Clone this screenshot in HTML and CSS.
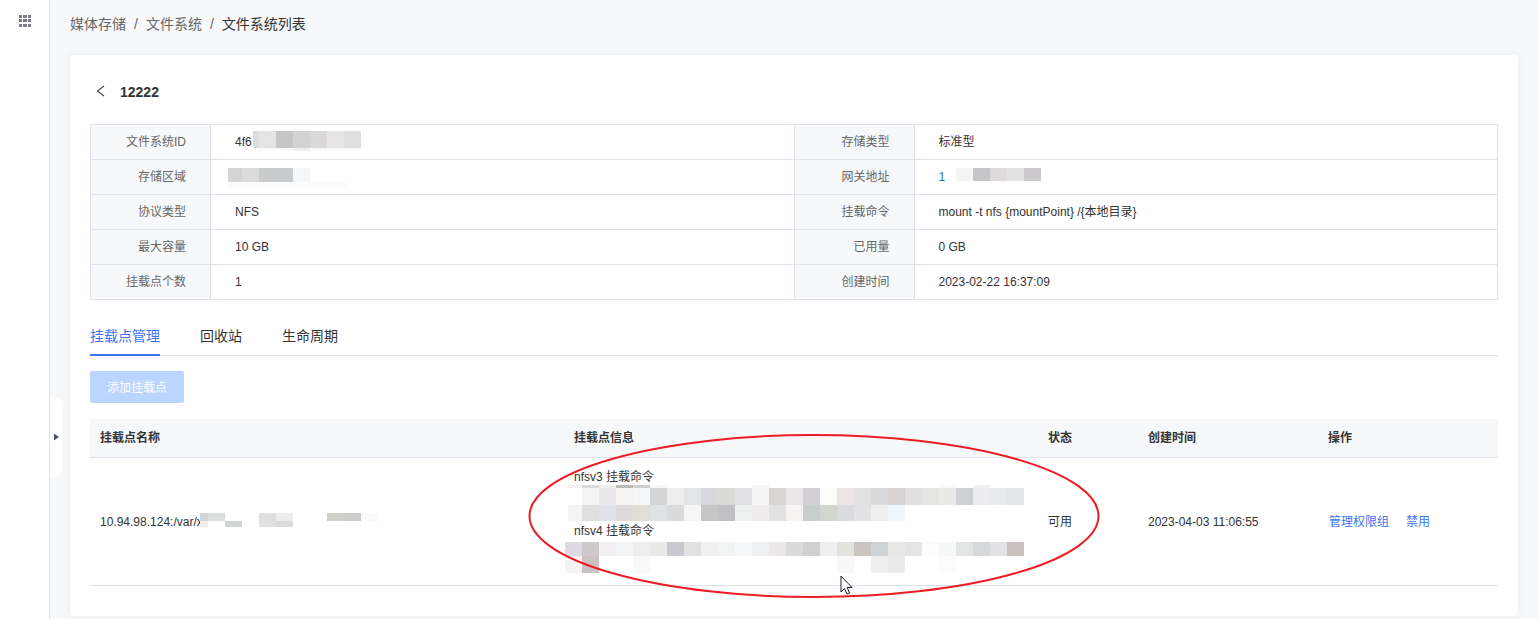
FILE: index.html
```
<!DOCTYPE html>
<html lang="zh-CN">
<head>
  <meta charset="utf-8">
  <title>文件系统列表</title>
  <link rel="stylesheet" href="styles.css">
</head>
<body>
  <div class="layout">
    <aside class="sidebar">
      <button type="button" class="menu-button" aria-label="菜单">
        <svg width="12" height="12" viewBox="0 0 12 12" fill="#7b7c86" shape-rendering="crispEdges">
          <path d="M0 0h3v3H0zM4 0h4v3H4zM9 0h3v3H9zM0 4h3v3H0zM4 4h4v3H4zM9 4h3v3H9zM0 9h3v3H0zM4 9h4v3H4zM9 9h3v3H9z"/>
        </svg>
      </button>
      <button type="button" class="sidebar-toggle" aria-label="展开">
        <svg width="5" height="8" viewBox="0 0 5 8"><path d="M0 0.500L5 4L0 7.500z" fill="#4c5468"/></svg>
      </button>
    </aside>

    <main class="content">
      <nav class="breadcrumb">
        <a href="#">媒体存储</a><span class="sep">/</span><a href="#">文件系统</a><span class="sep">/</span><span class="current">文件系统列表</span>
      </nav>

      <section class="card">
        <div class="card-title">
          <button type="button" class="back" aria-label="返回">
            <svg width="9" height="14" viewBox="0 0 9 14" fill="none" stroke="#4d4d4d" stroke-width="1.200"><path d="M8 1L1.500 6L8 11"/></svg>
          </button>
          <h1>12222</h1>
        </div>

        <table class="info">
          <colgroup><col class="col-label"><col><col class="col-label"><col></colgroup>
          <tr>
            <th>文件系统ID</th>
            <td>4f6<svg class="mosaic mosaic-id" data-mosaic="id" width="108" height="25"></svg></td>
            <th>存储类型</th>
            <td>标准型</td>
          </tr>
          <tr>
            <th>存储区域</th>
            <td><svg class="mosaic mosaic-region" data-mosaic="region" width="125" height="18"></svg></td>
            <th>网关地址</th>
            <td><span class="gateway">1</span><svg class="mosaic mosaic-gateway" data-mosaic="gateway" width="85" height="18"></svg></td>
          </tr>
          <tr>
            <th>协议类型</th>
            <td>NFS</td>
            <th>挂载命令</th>
            <td>mount -t nfs {mountPoint} /{本地目录}</td>
          </tr>
          <tr>
            <th>最大容量</th>
            <td>10 GB</td>
            <th>已用量</th>
            <td>0 GB</td>
          </tr>
          <tr>
            <th>挂载点个数</th>
            <td>1</td>
            <th>创建时间</th>
            <td>2023-02-22 16:37:09</td>
          </tr>
        </table>

        <div class="tabs" role="tablist">
          <button type="button" class="tab active" role="tab" aria-selected="true">挂载点管理</button>
          <button type="button" class="tab" role="tab">回收站</button>
          <button type="button" class="tab" role="tab">生命周期</button>
        </div>

        <button type="button" class="btn-add" disabled>添加挂载点</button>

        <table class="list">
          <colgroup><col><col><col class="col-status"><col class="col-time"><col class="col-action"></colgroup>
          <thead>
            <tr>
              <th>挂载点名称</th>
              <th>挂载点信息</th>
              <th>状态</th>
              <th>创建时间</th>
              <th>操作</th>
            </tr>
          </thead>
          <tbody>
            <tr>
              <td>10.94.98.124:/var/x<svg class="mosaic mosaic-name" data-mosaic="name" width="178" height="18"></svg></td>
              <td class="mount-info">
                <div>nfsv3 挂载命令</div>
                <svg class="mosaic-block" data-mosaic="nfsv3" width="459" height="36"></svg>
                <div>nfsv4 挂载命令</div>
                <svg class="mosaic-block" data-mosaic="nfsv4" width="459" height="36"></svg>
                <svg class="marker" width="572" height="166" viewBox="0 0 572 166" fill="none" stroke="#ed1c24" stroke-width="2">
                  <ellipse cx="286" cy="83" rx="284.500" ry="81"/>
                </svg>
                <svg class="pointer" width="13" height="20" viewBox="0 0 13 20">
                  <path d="M1 1V17L4.500 13.500L7 19L9.500 18L7.200 12.500H12z" fill="#fff" stroke="#1b1b2b"/>
                </svg>
              </td>
              <td>可用</td>
              <td>2023-04-03 11:06:55</td>
              <td><div class="actions"><a href="#">管理权限组</a><a href="#">禁用</a></div></td>
            </tr>
          </tbody>
        </table>
      </section>
    </main>
  </div>
  <script src="script.js"></script>
</body>
</html>
```

FILE: styles.css
```
:root {
  --bg: #f7f8fa;
  --line: #dfe1eb;
  --text: #333;
  --label: #666;
  --blue: #3d73f5;
}

* {
  box-sizing: border-box;
}

body {
  margin: 0;
  background: var(--bg);
  color: var(--text);
  font-family: "Liberation Sans", "Noto Sans CJK SC", sans-serif;
  font-size: 12px;
  line-height: 18px;
}

a {
  color: var(--blue);
  text-decoration: none;
}

button {
  border: 0;
  padding: 0;
  background: none;
  color: inherit;
  font-family: inherit;
  font-size: 14px;
}

table {
  width: 100%;
  table-layout: fixed;
  border-spacing: 0;
}

th {
  font-weight: normal;
  text-align: left;
}

.layout {
  display: flex;
  min-height: 100vh;
}

/* sidebar */
.sidebar {
  position: relative;
  flex: 0 0 50px;
  padding-top: 14px;
  border-right: 1px solid var(--line);
  background: #fff;
  text-align: center;
}

.menu-button svg,
.back svg,
.sidebar-toggle svg {
  display: block;
}

.menu-button {
  display: inline-block;
}

.sidebar-toggle {
  position: absolute;
  top: 397px;
  left: 50px;
  display: flex;
  align-items: center;
  width: 12px;
  height: 80px;
  padding-left: 4px;
  border-radius: 0 8px 8px 0;
  background: #fff;
}

/* content */
.content {
  flex: 1;
  min-width: 0;
  padding: 14px 20px 0;
}

.breadcrumb {
  margin-bottom: 21px;
  font-size: 14px;
  line-height: 20px;
}

.breadcrumb a,
.breadcrumb .sep {
  color: var(--label);
}

.breadcrumb .sep {
  margin: 0 8px;
}

.card {
  padding: 20px 20px 30px;
  border-radius: 4px;
  background: #fff;
  box-shadow: 0 0 10px rgba(30, 30, 90, 0.06);
}

.card-title {
  display: flex;
  align-items: center;
  gap: 15px;
  height: 34px;
  margin-bottom: 15px;
  padding-left: 6px;
}

.card-title h1 {
  margin: 0;
  font-size: 14px;
}

/* file system info */
.info {
  border-collapse: collapse;
}

.info th,
.info td {
  height: 35px;
  padding: 0 24px;
  border: 1px solid var(--line);
  white-space: nowrap;
}

.info th {
  background: var(--bg);
  color: var(--label);
  text-align: right;
}

.col-label {
  width: 120px;
}

.gateway {
  color: #1a6fb0;
}

/* tabs */
.tabs {
  display: flex;
  gap: 40px;
  height: 40px;
  margin: 16px 0 15px;
  border-bottom: 1px solid var(--line);
}

.tab {
  height: 40px;
  padding-bottom: 2px;
}

.tab.active {
  box-shadow: inset 0 -2px var(--blue);
  color: var(--blue);
}

.btn-add {
  display: block;
  height: 32px;
  margin-bottom: 16px;
  padding: 0 17px 2px;
  border-radius: 2px;
  background: #bad5ff;
  color: #fff;
  font-size: 12px;
}

/* mount point list */
.list th {
  height: 39px;
  padding: 0 10px;
  border-bottom: 1px solid var(--line);
  background: var(--bg);
  font-weight: bold;
}

.list td {
  padding: 10px 10px 9px;
  border-bottom: 1px solid var(--line);
  white-space: nowrap;
}

.col-status {
  width: 100px;
}

.col-time,
.col-action {
  width: 180px;
}

.actions {
  display: flex;
  gap: 15px;
}

.actions a {
  padding: 0 1px;
}

.mount-info {
  position: relative;
}

.marker {
  position: absolute;
  z-index: 1;
  top: -25px;
  left: -36px;
}

.pointer {
  position: absolute;
  z-index: 2;
  top: 117px;
  left: 276px;
}

/* masked values */
.mosaic {
  overflow: visible;
  vertical-align: middle;
}

.mosaic-id {
  margin-left: 1px;
}

.mosaic-region {
  margin-left: -7px;
}

.mosaic-gateway {
  margin-left: 11px;
}

.mosaic-name {
  margin-left: -3px;
}

.mosaic-block {
  display: block;
  margin: -1px 0 1px -9px;
}
```

FILE: script.js
```
// each strip: [x, y, height, colours], 17px per colour, "-" leaves a gap
var mosaics = {
  id: [
    [0, 1, 17, "#dddcdf"],
    [6, 1, 17, "#e3e5e4 #c6c6c6 #d2d3d5 #dad9d8 #e6e4e5 #dedee0"],
    [6, 18, 3, "#fafafa #fafafa #eeeef0 #fafafa #fafafa #fafafa"]
  ],
  region: [
    [0, 0, 14, "#d6d4d3"],
    [14, 0, 14, "#dadcdb #cacbcd #c8cccf #f5f6f8"],
    [0, 14, 6, "#fcfcfc #fcfcfc #fcfcfc #fcfcfc #fcfcfc #fcfcfc #fcfcfc"]
  ],
  gateway: [
    [0, 0, 13, "#f5f5f5 #c4c6c8 #dfdbdd #e2e2e2 #cccacd"]
  ],
  name: [
    [0, 0, 8, "#d4d6d5"],
    [8, 0, 8, "#dcdddd - - #dfdfe1 #ececed - - #d0d0cb #cdcdcc #fafafa"],
    [0, 8, 6, "#eeeeee"],
    [8, 8, 6, "#ffffff #d0d5d5 - #e3e1e3 #dbdbdb"]
  ],
  nfsv3: [
    [3, 0, 3, "#f2f2f2"],
    [17, 0, 3, "#dcdcdc #eeeeee #bcbab8 #cfd0d1 #f8f8f8 - - - - - #f6f6f6 - - - - - - - - - - #fafafa - #f0f0f0"],
    [17, 3, 17, "#f5f5f5 #e9e7e9 #f4f3f1 #f4f6f8 #d3d4d5 #eeeeec #e3e4e6 #d8d7dc #dbdbd5 #e1e1e3 #f4f4f4 #d8d7d5 #e8e6e9 #d2d0d6 #fcfcfc #ebe6e3 #e1e1e1 #dadadd #d7d3d2 #e0dedf #e4e6e4 #e9e9e7 #cdd1d4 #ecebee #e7ebee #e5e6e8"],
    [3, 20, 16, "#f4f4f4"],
    [17, 20, 16, "#dfdfdd #e0e2e7 #dfdbdd #e3ddda #dde2e5 #d8dadb #f6f6f6 #c6c6c4 #c0c0c4 #eff1f0 #eeebed #e2e2e2 #f5f4f2 #c8cecd #d3d5d0 #d9dbde #e2e1e4 #eeeeee #eff5fa"]
  ],
  nfsv4: [
    [0, 3, 14, "#dddbe1 #cdc9cb #f1eff1 #f2f3f4 #eeeeef #e8eae5 #cac8ce #e1e1e1 #f0f0f0 #f2f4f4 #f6f8fa #eef0f2 #ece8e8 #dbdadb #cfd1d0 #efeff1 #e2e3df #cac5c1 #cfd3d6 #e8e8e6 #e4e4e7 #fcfcfc #f6f7f9 #e3e5e4 #d6d8da #e2e1e3 #cbc2c0"],
    [0, 17, 17, "#f5f5f5 #c9c3c4 - - #f9f9f8 - - - - - - - - - - - #f8f8f8 - #efefef #eaeaea - - #fcfcfc"]
  ]
};

document.querySelectorAll("[data-mosaic]").forEach(function (svg) {
  var rects = "";
  mosaics[svg.dataset.mosaic].forEach(function (strip) {
    strip[3].split(" ").forEach(function (color, i) {
      if (color === "-") return;
      rects += '<rect x="' + (strip[0] + i * 17) + '" y="' + strip[1] + '" width="17" height="' + strip[2] + '" fill="' + color + '"/>';
    });
  });
  svg.innerHTML = rects;
});
```
